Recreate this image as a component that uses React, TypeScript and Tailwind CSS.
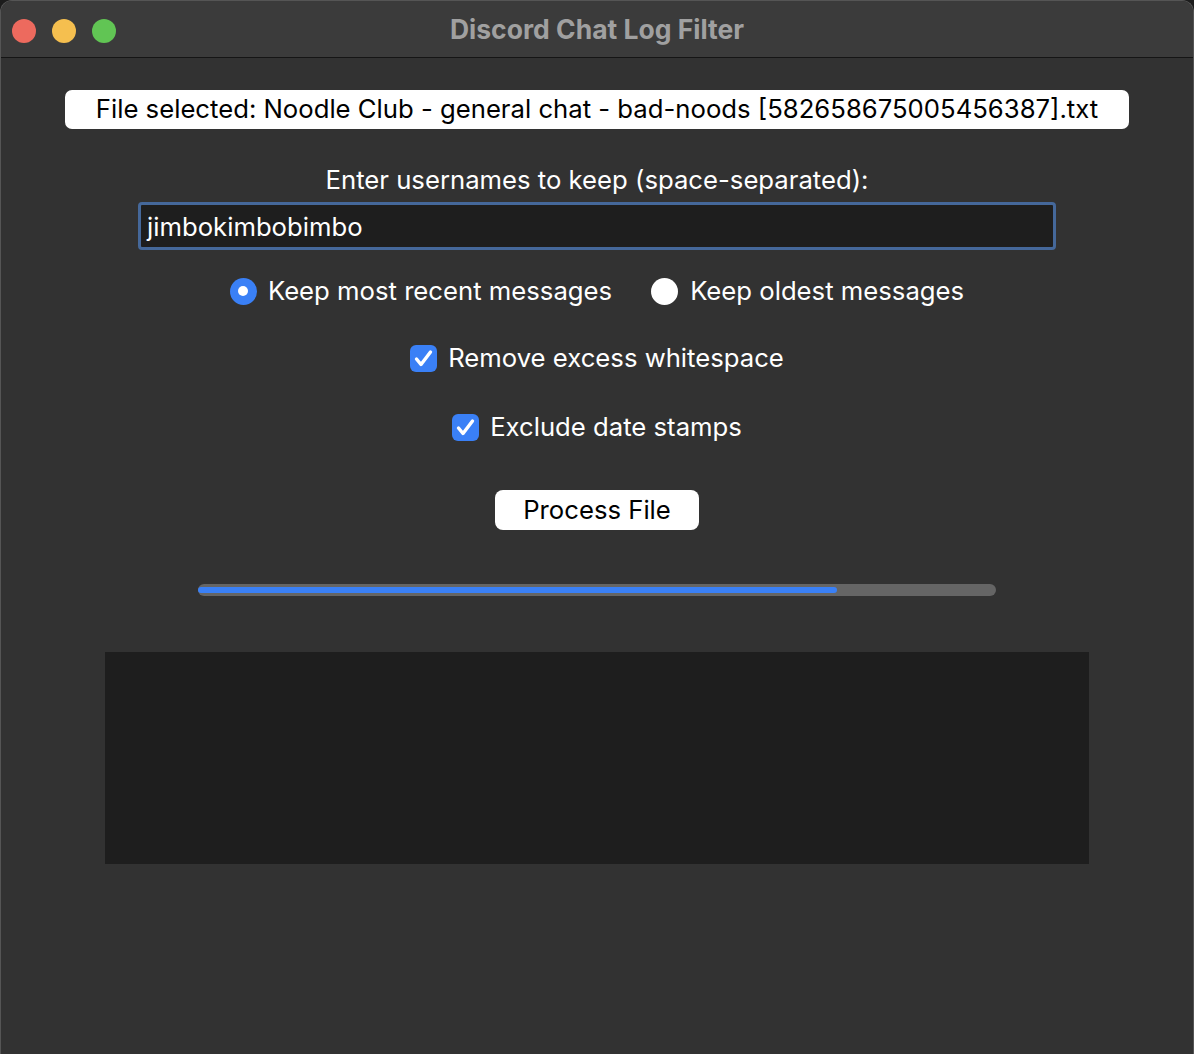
export default function App() {
  return (
    <div className="w-[1194px] h-[1054px] bg-[#1c1c1c] font-['Inter',sans-serif]">
      <div className="w-full h-full rounded-t-[12px] border-t border-x border-[#555555] bg-[#323232] overflow-hidden flex flex-col">
        {/* Title bar */}
        <div className="relative h-[57px] shrink-0 bg-[#3b3b3b] border-b border-[#151515] flex items-center justify-center">
          <div className="absolute left-[11px] top-[18px] flex gap-[16px]">
            <span className="w-[24px] h-[24px] rounded-full bg-[#ed6a5e]" />
            <span className="w-[24px] h-[24px] rounded-full bg-[#f5bf4f]" />
            <span className="w-[24px] h-[24px] rounded-full bg-[#61c554]" />
          </div>
          <span className="text-[26.5px] font-bold text-[#a0a0a0] mt-[1px]">Discord Chat Log Filter</span>
        </div>

        {/* Content */}
        <div className="flex flex-col items-center text-white text-[25.7px]">
          <div className="mt-[32px] w-[1064px] h-[39px] bg-white rounded-[7px] flex items-center justify-center text-black">
            File selected: Noodle Club - general chat - bad-noods [582658675005456387].txt
          </div>

          <div className="mt-[36px] h-[29px] leading-[29px]">Enter usernames to keep (space-separated):</div>

          <div className="mt-[8px] w-[918px] h-[48px] bg-[#1e1e1e] border-[3px] border-[#45689a] rounded-[4px] flex items-center px-[6px] pt-[2px]">
            jimbokimbobimbo
          </div>

          <div className="mt-[26px] h-[30px] flex items-center">
            <div className="flex items-center">
              <span className="w-[27px] h-[27px] rounded-full bg-[#3a80f6] flex items-center justify-center">
                <span className="w-[10px] h-[10px] rounded-full bg-white" />
              </span>
              <span className="ml-[11px]">Keep most recent messages</span>
            </div>
            <div className="flex items-center ml-[39px]">
              <span className="w-[27px] h-[27px] rounded-full bg-white" />
              <span className="ml-[12px]">Keep oldest messages</span>
            </div>
          </div>

          <div className="mt-[37px] h-[30px] flex items-center">
            <Check />
            <span className="ml-[11px]">Remove excess whitespace</span>
          </div>

          <div className="mt-[39px] h-[30px] flex items-center">
            <Check />
            <span className="ml-[11px]">Exclude date stamps</span>
          </div>

          <button className="mt-[48px] w-[204px] h-[40px] bg-white rounded-[8px] text-black">Process File</button>

          <div className="mt-[54px] w-[798px] h-[12px] rounded-full bg-[#656565] flex items-center">
            <div className="h-[6px] w-[639px] rounded-full bg-[#3a80f6]" />
          </div>

          <div className="mt-[56px] w-[984px] h-[212px] bg-[#1e1e1e]" />
        </div>
      </div>
    </div>
  );
}

function Check() {
  return (
    <span className="w-[27px] h-[27px] rounded-[6px] bg-[#3a80f6] flex items-center justify-center">
      <svg width="27" height="27" viewBox="0 0 27 27" fill="none">
        <path d="M6.5 14 L11 19.5 L20.5 7" stroke="white" strokeWidth="3.4" strokeLinecap="round" strokeLinejoin="round" />
      </svg>
    </span>
  );
}
